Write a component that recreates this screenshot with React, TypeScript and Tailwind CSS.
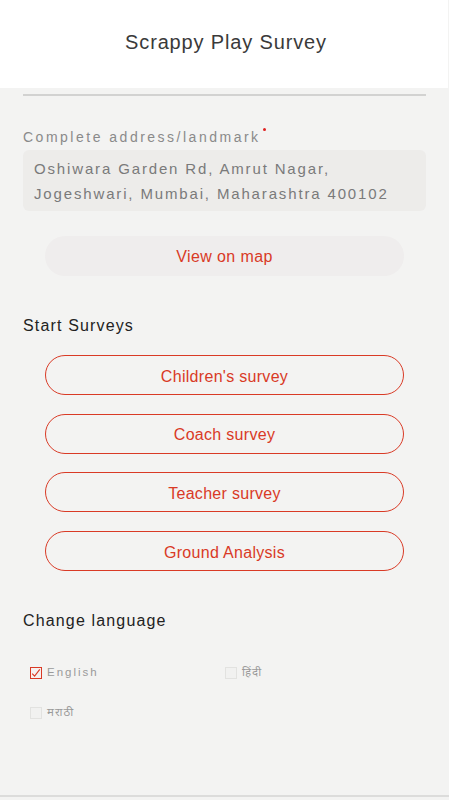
import React from "react";

const RED = "#d93a26";

function Check({ checked, label, hindi }: { checked?: boolean; label: string; hindi?: boolean }) {
  return (
    <div className="flex items-center gap-[5px] h-[20px]">
      <div
        className={
          "w-[12px] h-[12px] border flex items-center justify-center " +
          (checked ? "border-[#d93a26] bg-[#f7f1f0]" : "border-[#e2e2e0] bg-[#f1f1f0]")
        }
      >
        {checked && (
          <svg width="10" height="10" viewBox="0 0 10 10">
            <polyline points="1.2,5.6 3.6,8.2 8.8,1.4" fill="none" stroke={RED} strokeWidth="1.1" />
          </svg>
        )}
      </div>
      <span
        className={
          "text-[11.5px] text-[#9a9a9a] " + (hindi ? "tracking-[1px]" : "tracking-[2px]")
        }
        style={{ fontFamily: '"Liberation Sans", "Noto Sans", sans-serif' }}
      >
        {label}
      </span>
    </div>
  );
}

function SurveyButton({ label }: { label: string }) {
  return (
    <button className="mx-[45px] h-[40px] pt-[3px] rounded-full border border-[#d93a26] text-[16px] tracking-[0.3px] text-[#d93a26] flex items-center justify-center bg-transparent">
      {label}
    </button>
  );
}

export default function App() {
  return (
    <div
      className="w-[449px] h-[800px] bg-[#f3f3f2] flex flex-col overflow-hidden"
      style={{ fontFamily: '"Liberation Sans", Arial, sans-serif' }}
    >
      <div className="w-[448px] h-[88px] bg-white flex items-center justify-center shrink-0">
        <span className="text-[20px] text-[#3a3a3a] tracking-[0.85px] font-light -mt-[5px] ml-[4px]">
          Scrappy Play Survey
        </span>
      </div>
      <div className="flex-1 flex flex-col">
        <div className="mx-[23px] mt-[6px] h-[2px] bg-[#d2d2d1]" />
        <div className="mx-[23px] mt-[31px] h-[20px] flex items-center text-[14px] tracking-[2.5px] text-[#8a8a8a]">
          <span>Complete address/landmark</span>
          <span className="w-[3px] h-[3px] rounded-full bg-[#e02020] self-start mt-[1px] ml-[2px]" />
        </div>
        <div className="mx-[23px] mt-[3px] rounded-[6px] bg-[#edecea] pl-[11px] pt-[6px] pb-[5px] text-[15px] leading-[25px] tracking-[1.85px] text-[#7a7a7a]">
          <div>Oshiwara Garden Rd, Amrut Nagar,</div>
          <div>Jogeshwari, Mumbai, Maharashtra 400102</div>
        </div>
        <button className="mx-[45px] mt-[25px] h-[40px] pt-[2px] rounded-full bg-[#efeded] text-[16px] tracking-[0.4px] text-[#d93a26] flex items-center justify-center">
          View on map
        </button>
        <div className="mx-[23px] mt-[38px] h-[24px] flex items-center text-[16px] tracking-[1.15px] text-[#222]">
          Start Surveys
        </div>
        <div className="mt-[17px] flex flex-col gap-[18.7px]">
          <SurveyButton label="Children's survey" />
          <SurveyButton label="Coach survey" />
          <SurveyButton label="Teacher survey" />
          <SurveyButton label="Ground Analysis" />
        </div>
        <div className="mx-[23px] mt-[38px] h-[24px] flex items-center text-[16px] tracking-[1.15px] text-[#222]">
          Change language
        </div>
        <div className="ml-[30px] w-[390px] mt-[30px] grid grid-cols-2 gap-y-[20px]">
          <Check checked label="English" />
          <Check label="हिंदी" hindi />
          <Check label="मराठी" hindi />
        </div>
      </div>
      <div className="h-[2px] bg-[#dcdcdb] shrink-0" />
      <div className="h-[3px] shrink-0" />
    </div>
  );
}
